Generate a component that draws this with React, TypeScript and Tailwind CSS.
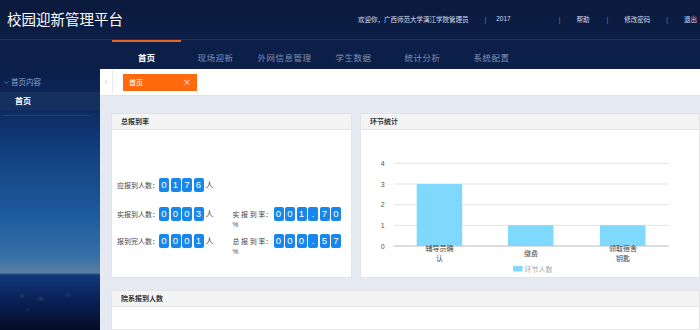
import React from 'react';
import { ChevronDown } from 'lucide-react';

const navItems = ['首页', '现场迎新', '外网信息管理', '学生数据', '统计分析', '系统配置'];

const DigitBoxes: React.FC<{ value: string }> = ({ value }) => (
  <div className="flex gap-[1.5px]">
    {value.split('').map((ch, i) => (
      <span
        key={i}
        className="w-[10px] h-[14px] rounded-[2px] bg-[#1787ec] text-white text-[9.5px] leading-[14px] text-center font-['Liberation_Sans',sans-serif]"
      >
        {ch}
      </span>
    ))}
  </div>
);

const PanelHeader: React.FC<{ title: string }> = ({ title }) => (
  <div className="h-[16px] bg-[#f4f4f4] border-b border-[#e6e6e6] flex items-center pl-[9px] text-[7px] font-bold text-[#333]">
    {title}
  </div>
);

const StageChart: React.FC = () => {
  const grid = [
    { v: 4, y: 33.3 },
    { v: 3, y: 54 },
    { v: 2, y: 74.7 },
    { v: 1, y: 95.3 },
    { v: 0, y: 116 },
  ];
  const bars = [
    { x: 55.7, top: 54 },
    { x: 147, top: 95.3 },
    { x: 239, top: 95.3 },
  ];
  return (
    <svg width="340" height="148" className="block">
      {grid.map((g) => (
        <g key={g.v}>
          <line x1="32.7" x2="307.7" y1={g.y} y2={g.y} stroke={g.v === 0 ? '#bbb' : '#e3e3e3'} strokeWidth="1" />
          <text x="21.7" y={g.y + 2.5} fontSize="7" fill="#555" textAnchor="middle" fontFamily="Liberation Sans, sans-serif">
            {g.v}
          </text>
        </g>
      ))}
      {bars.map((b, i) => (
        <rect key={i} x={b.x} y={b.top} width="45.5" height={116 - b.top} fill="#7fd8fd" />
      ))}
      <g fontSize="7" fill="#444" textAnchor="middle" fontFamily="Noto Sans CJK SC, sans-serif">
        <text x="78.5" y="121">辅导员确</text>
        <text x="78.5" y="130.5">认</text>
        <text x="170" y="125.5">缴费</text>
        <text x="262" y="121">领取宿舍</text>
        <text x="262" y="130.5">钥匙</text>
      </g>
      <rect x="152" y="136" width="9.5" height="5.5" fill="#7fd8fd" />
      <text x="163.5" y="141.5" fontSize="7" fill="#a8a8a8" fontFamily="Noto Sans CJK SC, sans-serif">
        环节人数
      </text>
    </svg>
  );
};

export default function App() {
  return (
    <div className="w-[700px] h-[330px] overflow-hidden flex flex-col bg-[#0b1c44] font-['Noto_Sans_CJK_SC',sans-serif]">
      {/* Top bar */}
      <div className="h-[40px] shrink-0 flex items-center border-b border-[#1d2f5c] bg-[linear-gradient(180deg,#0a1a3d,#0c1e46)]">
        <div className="pl-[7px] text-[14.5px] text-white leading-none">校园迎新管理平台</div>
        <div className="ml-auto pr-[3px] flex items-center text-[6.5px] text-[#d8dff0] leading-none">
          <span>欢迎你，广西师范大学漓江学院管理员</span>
          <span className="ml-[16px] text-[#8b9bbd]">|</span>
          <span className="ml-[10px] font-['Liberation_Sans',sans-serif]">2017</span>
          <span className="ml-[48px] text-[#8b9bbd]">|</span>
          <span className="ml-[16px]">帮助</span>
          <span className="ml-[17px] text-[#8b9bbd]">|</span>
          <span className="ml-[16px]">修改密码</span>
          <span className="ml-[16px] text-[#8b9bbd]">|</span>
          <span className="ml-[16px]">退出</span>
        </div>
      </div>

      {/* Nav */}
      <div className="h-[29px] shrink-0 flex pl-[112px] bg-[#0c1f48]">
        {navItems.map((item, i) => (
          <div
            key={item}
            className={
              i === 0
                ? 'w-[69px] border-t-2 border-[#e8622c] flex items-center justify-center pt-[3px] text-[8.5px] font-bold text-white'
                : 'w-[69px] border-t-2 border-transparent flex items-center justify-center pt-[3px] text-[8.5px] text-[#7f90b3] tracking-[0.5px]'
            }
          >
            {item}
          </div>
        ))}
      </div>

      <div className="flex-1 flex min-h-0">
        {/* Sidebar */}
        <aside className="w-[100px] shrink-0 relative bg-[linear-gradient(180deg,#0b1e4a_0%,#0e2d66_18%,#12407f_32%,#1c5a9c_55%,#3670a6_72%,#5c7ea2_78%,#0f3a7a_79%,#0c2660_86%,#081840_94%,#050b25_100%)]">
          <div className="h-[23px] flex items-center pl-[3px] pt-[3px] text-[7.5px] text-[#8ea6cc]">
            <ChevronDown className="w-[7px] h-[7px] mr-[1px]" strokeWidth={2} />
            首页内容
          </div>
          <div className="h-[18px] bg-[#15305f] flex items-center pl-[15px] text-[8px] font-bold text-white">首页</div>
          <div className="mt-[5px] ml-[2px] w-[88px] h-px bg-[#22406f]" />
          <div className="absolute left-[20px] top-[226px] w-[4px] h-[1.5px] rounded-full bg-[#c8a878] opacity-25 blur-[1px]" />
          <div className="absolute left-[38px] top-[229px] w-[5px] h-[1.5px] rounded-full bg-[#d0b080] opacity-25 blur-[1px]" />
          <div className="absolute left-[66px] top-[225px] w-[4px] h-[1.5px] rounded-full bg-[#b0a0a0] opacity-20 blur-[1px]" />
          <div className="absolute left-[26px] top-[240px] w-[3px] h-[2px] rounded-full bg-[#c09070] opacity-20 blur-[1px]" />
        </aside>

        {/* Main */}
        <main className="flex-1 flex flex-col bg-[#e5e9f1] min-w-0">
          <div className="h-[27px] shrink-0 bg-white border-b border-[#e2e2e2] flex items-center">
            <div className="w-[13px] h-full border-r border-[#ececec] flex items-center justify-center text-[9px] text-[#c8c8c8]">‹</div>
            <div className="ml-[10px] w-[74px] h-[17px] bg-[#ff6a0c] flex items-center justify-between pl-[6px] pr-[6px] text-white">
              <span className="text-[7px]">首页</span>
              <span className="text-[8px] leading-none">×</span>
            </div>
          </div>

          <div className="flex-1 pl-[11px] pt-[17px] flex flex-col gap-[12px] min-h-0">
            <div className="flex gap-[8px] h-[165px] shrink-0">
              {/* Total registration rate */}
              <section className="w-[241px] bg-white border border-[#e4e4e4] flex flex-col">
                <PanelHeader title="总报到率" />
                <div className="pl-[5px] pt-[48px] text-[7px] text-[#444]">
                  <div className="h-[29px] flex items-start">
                    <span className="w-[42px] leading-[14px]">应报到人数：</span>
                    <DigitBoxes value="0176" />
                    <span className="ml-[2px] text-[8px] leading-[14px]">人</span>
                  </div>
                  <div className="h-[27px] flex items-start">
                    <span className="w-[42px] leading-[14px]">实报到人数：</span>
                    <DigitBoxes value="0003" />
                    <span className="ml-[2px] text-[8px] leading-[14px]">人</span>
                    <div className="ml-[19px] flex flex-col">
                      <div className="flex items-start">
                        <span className="w-[41px] leading-[14px]">实 报 到 率：</span>
                        <DigitBoxes value="001.70" />
                      </div>
                      <span className="text-[6.5px] leading-[8px] font-['Liberation_Sans',sans-serif]">%</span>
                    </div>
                  </div>
                  <div className="h-[27px] flex items-start">
                    <span className="w-[42px] leading-[14px]">报到完人数：</span>
                    <DigitBoxes value="0001" />
                    <span className="ml-[2px] text-[8px] leading-[14px]">人</span>
                    <div className="ml-[19px] flex flex-col">
                      <div className="flex items-start">
                        <span className="w-[41px] leading-[14px]">总 报 到 率：</span>
                        <DigitBoxes value="000.57" />
                      </div>
                      <span className="text-[6.5px] leading-[8px] font-['Liberation_Sans',sans-serif]">%</span>
                    </div>
                  </div>
                </div>
              </section>

              {/* Stage statistics */}
              <section className="flex-1 bg-white border border-[#e4e4e4] flex flex-col min-w-0">
                <PanelHeader title="环节统计" />
                <StageChart />
              </section>
            </div>

            <section className="flex-1 bg-white border border-[#e4e4e4]">
              <PanelHeader title="院系报到人数" />
            </section>
          </div>
        </main>
      </div>
    </div>
  );
}
